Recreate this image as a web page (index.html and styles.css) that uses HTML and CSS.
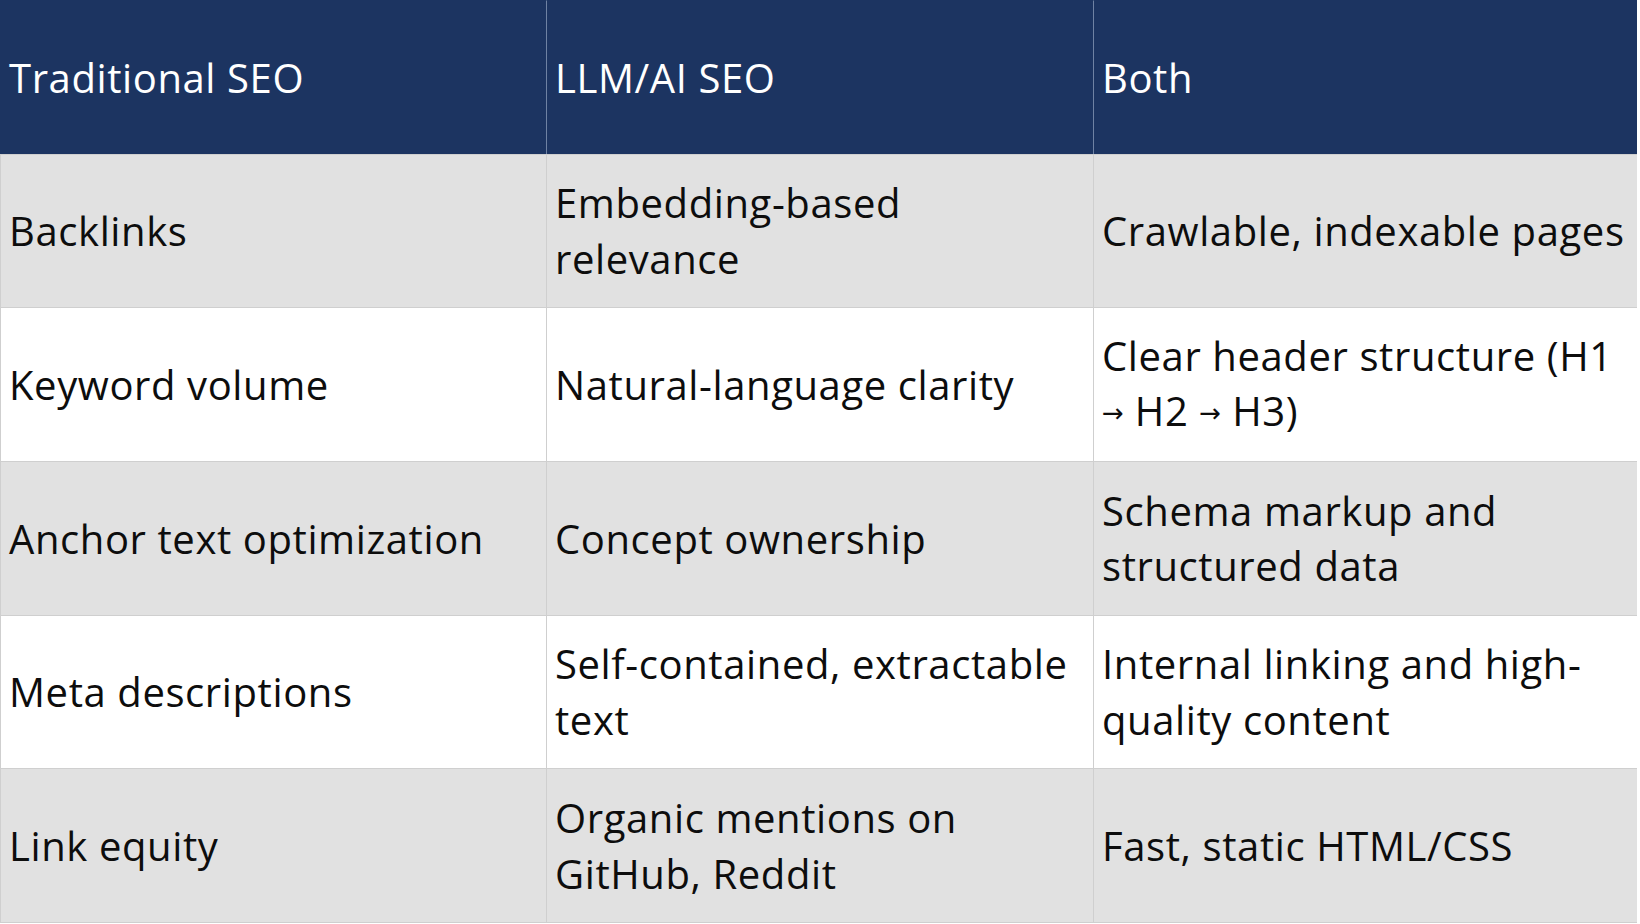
FILE: index.html
```html
<!DOCTYPE html>
<html>
<head>
<meta charset="utf-8">
<link rel="stylesheet" href="styles.css">
</head>
<body>
<div class="table">
  <div class="cell head"><span>Traditional SEO</span></div>
  <div class="cell head"><span>LLM/AI SEO</span></div>
  <div class="cell head"><span>Both</span></div>

  <div class="cell gray"><span>Backlinks</span></div>
  <div class="cell gray"><span>Embedding-based relevance</span></div>
  <div class="cell gray"><span>Crawlable, indexable pages</span></div>

  <div class="cell"><span>Keyword volume</span></div>
  <div class="cell"><span>Natural-language clarity</span></div>
  <div class="cell"><span>Clear header structure (H1 <span class="arr">→</span> H2 <span class="arr">→</span> H3)</span></div>

  <div class="cell gray"><span>Anchor text optimization</span></div>
  <div class="cell gray"><span>Concept ownership</span></div>
  <div class="cell gray"><span>Schema markup and structured data</span></div>

  <div class="cell"><span>Meta descriptions</span></div>
  <div class="cell"><span>Self-contained, extractable text</span></div>
  <div class="cell"><span>Internal linking and high-quality content</span></div>

  <div class="cell gray"><span>Link equity</span></div>
  <div class="cell gray"><span>Organic mentions on GitHub, Reddit</span></div>
  <div class="cell gray"><span>Fast, static HTML/CSS</span></div>
</div>
</body>
</html>
```
FILE: styles.css
```css
html, body {
  margin: 0;
  padding: 0;
  background: #ffffff;
}
.table {
  width: 1637px;
  height: 923px;
  display: grid;
  grid-template-columns: 546px 547px 544px;
  grid-template-rows: repeat(6, 1fr);
  font-family: "Open Sans", "Noto Sans", sans-serif;
  font-size: 40px;
  letter-spacing: 0.6px;
  line-height: 55.5px;
  color: #0d0d0d;
  border-right: 1px solid #cfcfcf;
  border-bottom: 1px solid #cfcfcf;
  box-sizing: border-box;
}
.cell {
  display: flex;
  align-items: center;
  padding: 0 6px 0 8px;
  border-top: 1px solid #cfcfcf;
  border-left: 1px solid #cfcfcf;
  background: #ffffff;
  box-sizing: border-box;
}
.gray {
  background: #e1e1e1;
}
.head {
  background: #1c3461;
  color: #ffffff;
  border-color: #6f82a3;
  border-top-color: #1c3461;
}
.head:first-child {
  border-left-color: #1c3461;
}
.arr {
  font-family: "DejaVu Sans", sans-serif;
  font-size: 26px;
  letter-spacing: 0;
  vertical-align: 4px;
}
```
